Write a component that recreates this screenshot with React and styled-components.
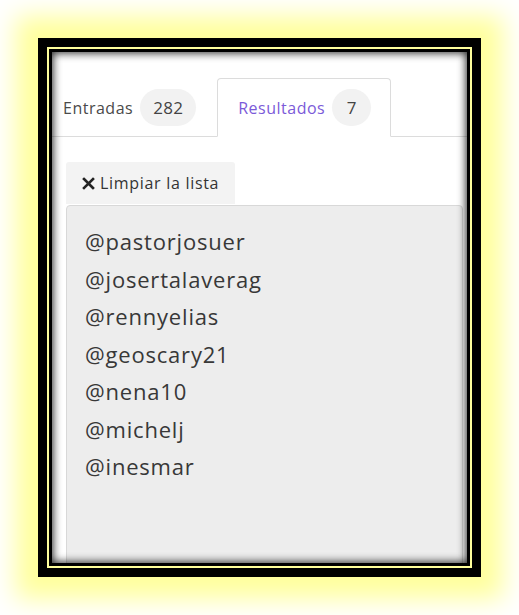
import React from "react";
import styled, { createGlobalStyle } from "styled-components";

const Global = createGlobalStyle`
  html, body { margin: 0; padding: 0; background: #fff; }
  body { font-family: "Open Sans", "Noto Sans", sans-serif; }
`;

const Page = styled.div`
  width: 519px;
  height: 615px;
  padding: 38px 0 0 38px;
  box-sizing: border-box;
  overflow: hidden;
`;

const Frame = styled.div`
  width: 443px;
  height: 539px;
  box-sizing: border-box;
  border: 9px solid #000;
  padding: 2px;
  background: #ffff9c;
  box-shadow: 0 0 24px 22px #ffff9c;
`;

const InnerBorder = styled.div`
  height: 100%;
  box-sizing: border-box;
  border: 3px solid #000;
`;

const Screen = styled.div`
  position: relative;
  height: 100%;
  overflow: hidden;
  background: #fff;
  &::after {
    content: "";
    position: absolute;
    inset: 0;
    pointer-events: none;
    box-shadow: inset 0 0 9px 1px rgba(0, 0, 0, 0.85);
  }
`;

const TabBar = styled.div`
  display: flex;
  align-items: stretch;
  margin-top: 26px;
  height: 59px;
  padding-left: 10px;
  border-bottom: 1px solid #dcdcdc;
  box-sizing: border-box;
`;

const Tab = styled.div`
  display: flex;
  align-items: center;
  gap: 7px;
  font-size: 16px;
  letter-spacing: 0.5px;
  color: ${(p) => (p.$active ? "#7b5ad9" : "#4a4a4a")};
  padding: ${(p) => (p.$active ? "0 19px 0 20px" : "0 20px 0 0")};
  border: 1px solid ${(p) => (p.$active ? "#dcdcdc" : "transparent")};
  border-bottom-color: ${(p) => (p.$active ? "#fff" : "transparent")};
  border-radius: 4px 4px 0 0;
  background: ${(p) => (p.$active ? "#fff" : "transparent")};
  margin-bottom: -1px;
`;

const Badge = styled.span`
  display: inline-flex;
  align-items: center;
  justify-content: center;
  min-width: 39px;
  height: 37px;
  padding: 0 13px;
  box-sizing: border-box;
  border-radius: 19px;
  background: #f2f2f2;
  color: #444;
  font-size: 17px;
  letter-spacing: 0.3px;
`;

const Body = styled.div`
  padding: 25px 4px 0 14px;
`;

const ClearButton = styled.div`
  display: inline-flex;
  align-items: center;
  gap: 5px;
  height: 42px;
  padding: 0 16px;
  background: #f3f3f3;
  border-radius: 3px 3px 0 0;
  color: #333;
  font-size: 16px;
  letter-spacing: 0.7px;
  box-sizing: border-box;
`;

const List = styled.div`
  margin-top: 1px;
  height: 400px;
  background: #ededed;
  border: 1px solid #d8d8d8;
  border-radius: 4px;
  padding: 17px 0 0 18px;
  box-sizing: border-box;
`;

const Item = styled.div`
  font-size: 22px;
  line-height: 37.5px;
  color: #383838;
  letter-spacing: 0.8px;
`;

const users = [
  "@pastorjosuer",
  "@josertalaverag",
  "@rennyelias",
  "@geoscary21",
  "@nena10",
  "@michelj",
  "@inesmar",
];

export default function App() {
  return (
    <>
      <Global />
      <Page>
        <Frame>
          <InnerBorder>
            <Screen>
              <TabBar>
                <Tab>
                  Entradas <Badge>282</Badge>
                </Tab>
                <Tab $active>
                  Resultados <Badge>7</Badge>
                </Tab>
              </TabBar>
              <Body>
                <ClearButton>
                  <svg width="13" height="13" viewBox="0 0 13 13">
                    <path d="M2 2 L11 11 M11 2 L2 11" stroke="#222" strokeWidth="2.6" strokeLinecap="square" />
                  </svg>
                  Limpiar la lista
                </ClearButton>
                <List>
                  {users.map((u) => (
                    <Item key={u}>{u}</Item>
                  ))}
                </List>
              </Body>
            </Screen>
          </InnerBorder>
        </Frame>
      </Page>
    </>
  );
}
